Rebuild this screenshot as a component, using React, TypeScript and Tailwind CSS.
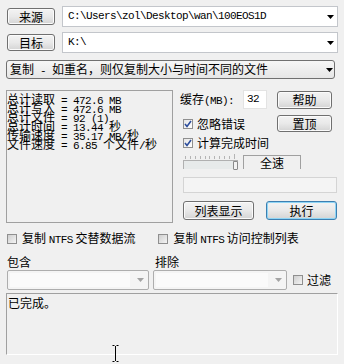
import type { ReactNode } from 'react';

const CJK = "font-['Noto_Sans_CJK_SC',sans-serif]";
const MONO = "font-['Liberation_Mono',monospace] text-[11px] tracking-[-0.6px]";

// split text into ascii runs (bitmap-ish mono) and CJK runs
const Mix = ({ text }: { text: string }) => {
  const runs = text.match(/[\x00-\x7f]+|[^\x00-\x7f]+/g) ?? [];
  return (
    <>
      {runs.map((r, i) =>
        /^[\x00-\x7f]+$/.test(r) ? (
          <span key={i} className={`${MONO} whitespace-pre`}>{r}</span>
        ) : (
          <span key={i} className={`${CJK} text-[12px]`}>{r}</span>
        )
      )}
    </>
  );
};

const Arrow = ({ color = '#000' }: { color?: string }) => (
  <svg width="7" height="4" viewBox="0 0 7 4">
    <polygon points="0,0 7,0 3.5,4" fill={color} />
  </svg>
);

const Btn = ({ children, className = '', primary = false }: { children: ReactNode; className?: string; primary?: boolean }) => (
  <div
    className={`flex items-center justify-center rounded-[3px] border bg-linear-to-b from-[#f3f3f3] via-[#e9e9e9] to-[#d4d4d4] text-[12px] leading-none ${CJK} ${
      primary ? 'border-[#3c7fb1] shadow-[inset_0_0_0_1px_#8fd5f5]' : 'border-[#707070] shadow-[inset_0_0_0_1px_#fbfbfb]'
    } ${className}`}
  >
    {children}
  </div>
);

const Check = ({ checked = false }: { checked?: boolean }) => (
  <div className="w-[10px] h-[10px] shrink-0 border border-[#8f8f8f] flex items-center justify-center bg-white">
    <div
      className={`w-[8px] h-[8px] flex items-center justify-center ${
        checked ? 'bg-linear-to-br from-[#e6e6e6] to-[#ffffff]' : 'bg-linear-to-br from-[#cfcfcf] to-[#f4f4f4]'
      }`}
    >
      {checked && (
        <svg width="8" height="8" viewBox="0 0 8 8">
          <path d="M1 4 L3 6.5 L7 1" stroke="#2c4d9c" strokeWidth="1.6" fill="none" />
        </svg>
      )}
    </div>
  </div>
);

const STATS = [
  '总计读取 = 472.6 MB',
  '总计写入 = 472.6 MB',
  '总计文件 = 92 (1)',
  '总计时间 = 13.44 秒',
  '传输速度 = 35.17 MB/秒',
  '文件速度 = 6.85 个文件/秒',
];

export default function App() {
  return (
    <div className={`relative w-[344px] h-[364px] overflow-hidden bg-[#f0f0f0] text-black ${CJK}`}>
      {/* source */}
      <div className="flex items-center pt-[6px] pl-[7px]">
        <Btn className="w-[48px] h-[17px]">来源</Btn>
        <div className="ml-[7px] w-[276px] h-[21px] bg-white border border-[#c3c6cb] flex items-center pl-[5px] pr-[3px]">
          <span className={`${MONO} flex-1`}>C:\Users\zol\Desktop\wan\100EOS1D</span>
          <Arrow />
        </div>
      </div>

      {/* destination */}
      <div className="flex items-center mt-[5px] pl-[7px]">
        <Btn className="w-[48px] h-[17px]">目标</Btn>
        <div className="ml-[7px] w-[276px] h-[21px] bg-white border border-[#c3c6cb] flex items-center pl-[5px] pr-[3px]">
          <span className={`${MONO} flex-1`}>K:\</span>
          <Arrow />
        </div>
      </div>

      {/* mode */}
      <div className="mt-[7px] ml-[6px] w-[329px] h-[19px] rounded-[3px] border border-[#707070] bg-linear-to-b from-[#f6f6f6] to-[#e6e6e6] flex items-center pl-[3px] pr-[1px]">
        <span className="flex-1 text-[12px] leading-none whitespace-pre">
          复制<span className={MONO}> - </span>如重名，则仅复制大小与时间不同的文件
        </span>
        <Arrow />
      </div>

      {/* middle */}
      <div className="flex mt-[11px]">
        <div className="ml-[6px] w-[167px] h-[133px] border border-[#a0a0a0] pt-[2px]">
          {STATS.map((s) => (
            <div key={s} className="h-[9px] leading-[9px] whitespace-pre">
              <Mix text={s} />
            </div>
          ))}
        </div>

        <div className="ml-[7px] w-[157px] flex flex-col">
          <div className="flex items-center h-[19px]">
            <span className="w-[63px] text-[12px] leading-none">
              缓存<span className={MONO}>(MB):</span>
            </span>
            <div className={`w-[24px] h-[19px] bg-white border border-[#e3e3e3] flex items-center pl-[3px] ${MONO}`}>32</div>
            <Btn className="ml-[10px] w-[55px] h-[18px]">帮助</Btn>
          </div>

          <div className="flex items-center mt-[6px] h-[17px]">
            <div className="ml-[3px]"><Check checked /></div>
            <span className="ml-[4px] text-[12px] leading-none flex-1">忽略错误</span>
            <Btn className="mr-[5px] w-[55px] h-[17px]">置顶</Btn>
          </div>

          <div className="flex items-center mt-[5px] h-[12px]">
            <div className="ml-[3px]"><Check checked /></div>
            <span className="ml-[4px] text-[12px] leading-none">计算完成时间</span>
          </div>

          <div className="flex items-end mt-[4px] h-[16px]">
            <div className="ml-[3px] w-[55px] flex flex-col">
              <div className="flex justify-between items-end h-[5px] pl-[2px] pr-[3px]">
                {[0, 1, 2, 3, 4, 5, 6, 7, 8, 9, 10].map((i) => (
                  <div key={i} className={`w-px bg-[#b4b4b4] ${i === 10 ? 'h-[5px]' : 'h-[3px]'}`} />
                ))}
              </div>
              <div className="relative mt-[1px] h-[9px] border-t border-l border-[#b0b0b0] bg-[#e7eaea]">
                <div className="absolute right-0 top-0 w-[5px] h-[9px] border border-[#8a8a8a] rounded-b-[1px] bg-[#f2f2f2]" />
              </div>
            </div>
            <div className="ml-[5px] w-[58px] h-[14px] border-t border-l border-r border-[#a0a0a0] flex items-center justify-center text-[12px] leading-none">
              全速
            </div>
          </div>

          <div className="ml-[3px] mt-[8px] w-[154px] h-[16px] border border-[#d4d4d4] bg-[#f4f4f4]" />

          <div className="flex mt-[8px] ml-[3px]">
            <Btn className="w-[71px] h-[19px]">列表显示</Btn>
            <Btn primary className="ml-[12px] w-[71px] h-[19px]">执行</Btn>
          </div>
        </div>
      </div>

      {/* ntfs options */}
      <div className="flex items-center mt-[10px] h-[12px]">
        <div className="ml-[7px]"><Check /></div>
        <span className="ml-[5px] text-[12px] leading-none">
          复制 <span className={MONO}>NTFS</span> 交替数据流
        </span>
        <div className="ml-[23px]"><Check /></div>
        <span className="ml-[5px] text-[12px] leading-none">
          复制 <span className={MONO}>NTFS</span> 访问控制列表
        </span>
      </div>

      {/* filters */}
      <div className="flex mt-[11px] h-[13px] text-[12px] leading-none">
        <span className="ml-[7px] w-[148px]">包含</span>
        <span>排除</span>
      </div>
      <div className="flex items-center mt-[1px] h-[20px]">
        <div className="ml-[7px] w-[142px] h-[20px] rounded-[2px] border border-[#adadad] bg-[#f4f4f4] flex items-center p-[2px] pr-[4px]">
          <div className="w-[120px] h-full bg-[#fafafa]" />
          <div className="ml-auto"><Arrow color="#a3a3a3" /></div>
        </div>
        <div className="ml-[4px] w-[134px] h-[20px] rounded-[2px] border border-[#adadad] bg-[#f4f4f4] flex items-center p-[2px] pr-[4px]">
          <div className="w-[112px] h-full bg-[#fafafa]" />
          <div className="ml-auto"><Arrow color="#a3a3a3" /></div>
        </div>
        <div className="ml-[6px]"><Check /></div>
        <span className="ml-[4px] text-[12px] leading-none">过滤</span>
      </div>

      {/* log */}
      <div className="ml-[6px] mt-[3px] w-[332px] h-[62px] border-t border-l border-[#a0a0a0] border-b border-r border-b-white border-r-white px-[1px] pt-[3px] text-[12px] leading-none">
        已完成。
      </div>

      {/* text cursor */}
      <svg className="absolute left-[112px] top-[345px]" width="7" height="17" viewBox="0 0 7 17">
        <path d="M0.5 0.5 H2.5 M4.5 0.5 H6.5 M3.5 1 V16 M0.5 16.5 H2.5 M4.5 16.5 H6.5" stroke="#000" strokeWidth="1" fill="none" />
      </svg>
    </div>
  );
}
